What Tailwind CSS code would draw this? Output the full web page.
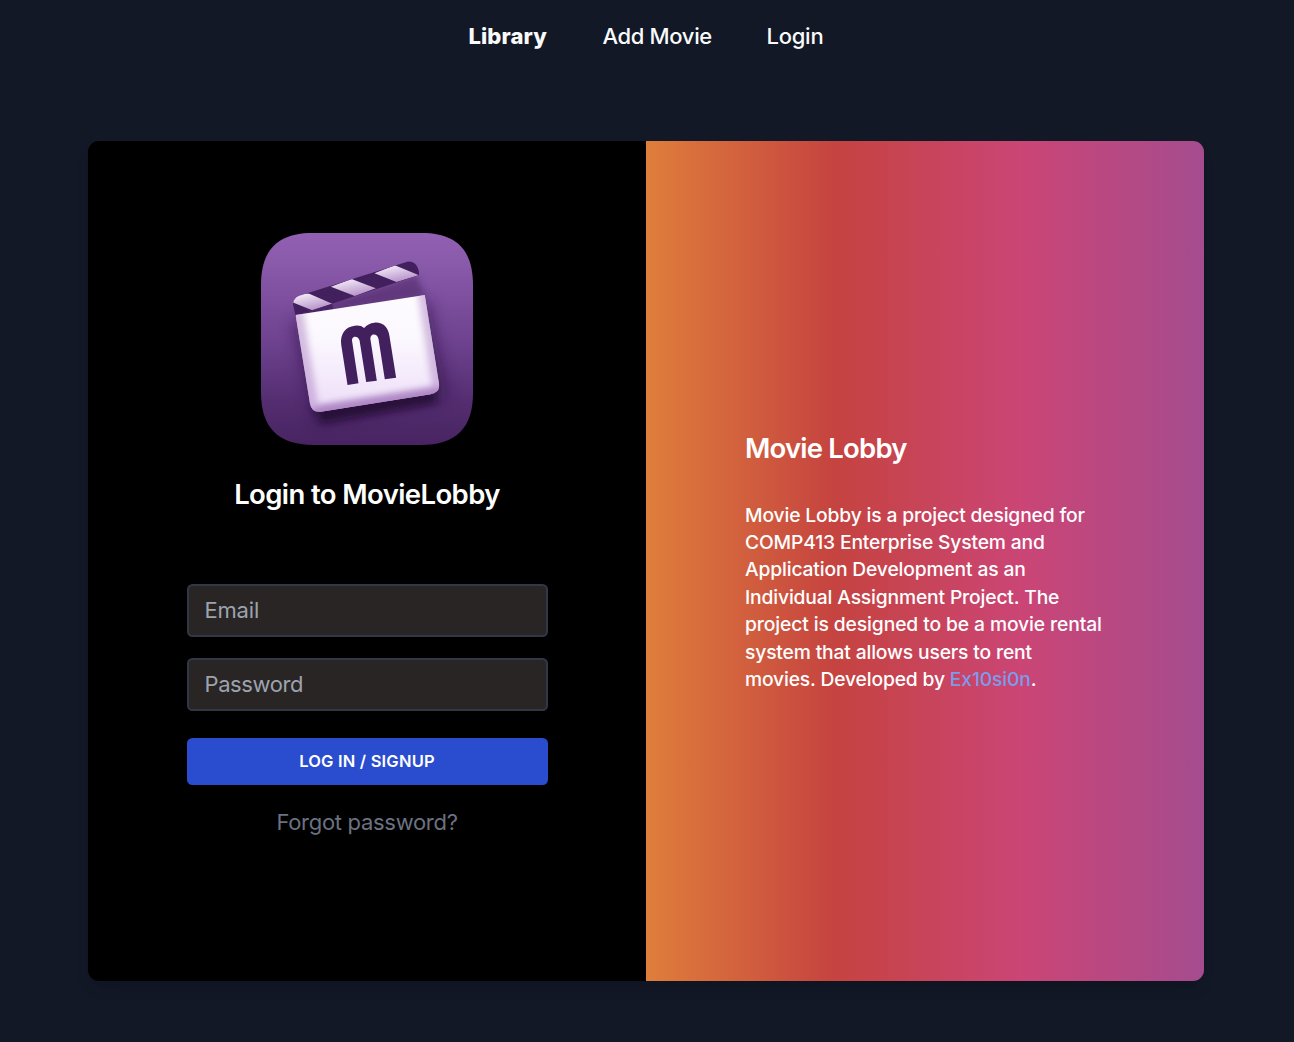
<!DOCTYPE html>
<html lang="en">
<head>
<meta charset="utf-8">
<title>Movie Lobby</title>
<script src="https://cdn.jsdelivr.net/npm/@tailwindcss/browser@4"></script>
</head>
<body class="h-[1042px] overflow-hidden bg-[#121826] font-['Inter',sans-serif] text-[22px] text-white">
<nav class="flex h-[73px] justify-center gap-[55px] pr-[2px] text-[#f9fafb]">
  <a class="w-[79px] whitespace-nowrap pt-[20px] leading-[33px] font-extrabold tracking-[0.1px]">Library</a>
  <a class="w-[109px] whitespace-nowrap pt-[20px] leading-[33px] font-medium tracking-[-0.35px]">Add Movie</a>
  <a class="w-[57px] whitespace-nowrap pt-[20px] leading-[33px] font-medium tracking-[-0.25px]">Login</a>
</nav>
<main class="mt-[68px] ml-[88px] flex h-[840px] w-[1116px] overflow-hidden rounded-[11px] shadow-lg">
  <section class="flex w-[558px] flex-col items-center bg-black px-[98px] pt-[92px]">
    <svg class="h-[212px] w-[212px] shrink-0" viewBox="33 24 637 636" preserveAspectRatio="none">
      <defs>
        <linearGradient id="tile" x1="0" y1="0" x2="0" y2="1">
          <stop offset="0" stop-color="#9160b2"/><stop offset=".15" stop-color="#8959aa"/><stop offset=".5" stop-color="#6f4390"/><stop offset=".8" stop-color="#542d70"/><stop offset="1" stop-color="#472461"/>
        </linearGradient>
        <linearGradient id="face" x1="0" y1="0" x2="0" y2="1">
          <stop offset="0" stop-color="#fefcff"/><stop offset=".4" stop-color="#fbf7fe"/><stop offset="1" stop-color="#ecdcf8"/>
        </linearGradient>
        <linearGradient id="stripe" x1="0" y1="0" x2=".55" y2="1">
          <stop offset=".2" stop-color="#f0e5f6"/><stop offset="1" stop-color="#b692c8"/>
        </linearGradient>
        <filter id="soft" x="-30%" y="-30%" width="160%" height="160%"><feGaussianBlur stdDeviation="24"/></filter>
        <filter id="edge" x="-20%" y="-20%" width="140%" height="140%"><feGaussianBlur stdDeviation="10"/></filter>
        <clipPath id="tileclip"><path d="M187 24H516C622 24 670 76 670 181V504C670 610 618 660 514 660H190C84 660 33 608 33 502V180C33 76 82 24 187 24Z"/></clipPath>
        <clipPath id="faceclip"><path d="M137 270L525 210L568 476Q571 503 543 508L213 560Q185 564 180 535Z"/></clipPath>
        <clipPath id="barclip"><path d="M130 243C127 225 138 214 155 210L470 111C490 105 508 120 508 150L187 256L137 270Z"/></clipPath>
      </defs>
      <g clip-path="url(#tileclip)">
        <rect x="33" y="24" width="637" height="636" fill="url(#tile)"/>
        <path d="M130 290L535 225L592 520L200 595Z" fill="#28103b" opacity=".55" filter="url(#soft)"/>
        <path d="M190 545L555 495L560 535L215 595Z" fill="#221030" opacity=".75" filter="url(#edge)"/>
        <path d="M150 265L500 150L525 212L140 270Z" fill="#4b2763" opacity=".55" filter="url(#edge)"/>
      </g>
      <path d="M132 245L137 270L250 252L247 236L187 256Z" fill="#4b2667"/>
      <g clip-path="url(#barclip)">
        <path d="M120 100H515V275H120Z" fill="#42205d"/>
        <path d="M120 229L145 205L178 206L247 236L187 256Z" fill="url(#stripe)"/>
        <path d="M243 185L305 162L378 190L315 213Z" fill="url(#stripe)"/>
        <path d="M374 145L435 121L508 151L440 171Z" fill="url(#stripe)"/>
      </g>
      <g clip-path="url(#faceclip)">
        <path d="M130 200H580V570H130Z" fill="url(#face)"/>
        <path d="M137 258L184 548Q188 566 210 561L550 507Q573 502 568 476L525 198" fill="none" stroke="#ad83c4" stroke-width="44" opacity=".5" filter="url(#edge)"/>
        <path d="M190 553Q195 563 210 561L550 507Q565 504 564 488" fill="none" stroke="#8f5cab" stroke-width="36" opacity=".5" filter="url(#edge)"/>
      </g>
      <path d="M293 480L274 359C270 326 287 305 315 302Q333 300 343 309Q354 295 374 293C399 291 415 306 419 333L439 458L405 463L386 341C381 322 359 326 362 344L381 467L349 471L329 346C323 330 303 333 307 350L326 475Z" fill="#42205e"/>
    </svg>
    <h4 class="mt-[32px] h-[34px] whitespace-nowrap text-[27.5px] leading-[34px] font-semibold tracking-[-0.6px]">Login to MovieLobby</h4>
    <form class="mt-[73px] flex w-[361px] flex-col">
      <input type="email" placeholder="Email" class="h-[53px] rounded-[5.5px] border-2 border-[#303847] bg-[#292524] px-[16px] pb-[2px] tracking-[-0.2px] placeholder:text-[#9ca3af]">
      <input type="password" placeholder="Password" class="mt-[21px] h-[53px] rounded-[5.5px] border-2 border-[#303847] bg-[#292524] px-[16px] pb-[2px] tracking-[-0.4px] placeholder:text-[#9ca3af]">
      <button type="button" class="mt-[27px] h-[47px] rounded-[5.5px] bg-[#2a4dd0] text-[16.5px] font-semibold tracking-[0.2px]">LOG IN / SIGNUP</button>
      <a class="mt-[21px] text-center leading-[33px] tracking-[-0.3px] whitespace-nowrap text-[#6b7280]">Forgot password?</a>
    </form>
  </section>
  <section class="flex w-[558px] flex-col bg-[linear-gradient(to_right,#df7e3b,#c54340_34%,#cb4575_67%,#a54c8f)] pt-[289px] pl-[99px]">
    <h4 class="text-[27.5px] leading-[36px] font-semibold tracking-[-0.8px]">Movie Lobby</h4>
    <p class="mt-[35.5px] text-[19.25px] leading-[27.45px] font-medium tracking-[-0.15px] whitespace-nowrap">Movie Lobby is a project designed for<br>COMP413 Enterprise System and<br>Application Development as an<br>Individual Assignment Project. The<br><span class="tracking-[-0.1px]">project is designed to be a movie rental</span><br>system that allows users to rent<br>movies. Developed by <a class="text-[#7d9bea]">Ex10si0n</a>.</p>
  </section>
</main>
</body>
</html>
